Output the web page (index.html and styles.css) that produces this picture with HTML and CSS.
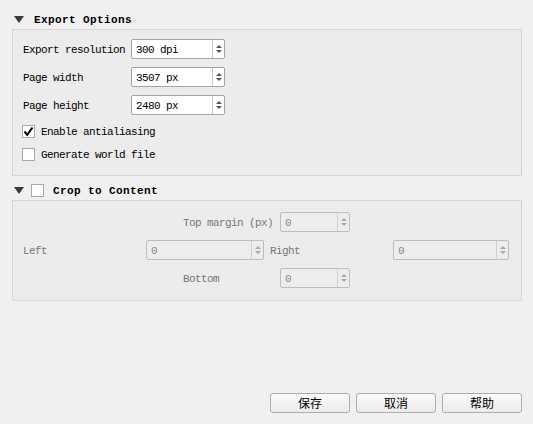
FILE: index.html
```html
<!DOCTYPE html>
<html>
<head>
<meta charset="utf-8">
<link rel="stylesheet" href="styles.css">
</head>
<body>
<div class="page">
  <div class="header first">
    <span class="tri"></span>
    <span class="htext">Export Options</span>
  </div>
  <div class="group g1">
    <div class="row">
      <span class="label lw1">Export resolution</span>
      <div class="spin w94"><span class="val">300 dpi</span><span class="btns"><i class="up"></i><i class="dn"></i></span></div>
    </div>
    <div class="row">
      <span class="label lw1">Page width</span>
      <div class="spin w94"><span class="val">3507 px</span><span class="btns"><i class="up"></i><i class="dn"></i></span></div>
    </div>
    <div class="row">
      <span class="label lw1">Page height</span>
      <div class="spin w94"><span class="val">2480 px</span><span class="btns"><i class="up"></i><i class="dn"></i></span></div>
    </div>
    <div class="check-row cr1">
      <span class="cb"><svg width="11" height="11" viewBox="0 0 11 11"><polyline points="1.5,5.5 4.2,8.8 9.5,1.5" fill="none" stroke="#000" stroke-width="2"/></svg></span>
      <span class="label">Enable antialiasing</span>
    </div>
    <div class="check-row cr2">
      <span class="cb"></span>
      <span class="label">Generate world file</span>
    </div>
  </div>
  <div class="header second">
    <span class="tri"></span>
    <span class="cb hcb"></span>
    <span class="htext">Crop to Content</span>
  </div>
  <div class="group g2">
    <div class="row indent">
      <span class="label lw2">Top margin (px)</span>
      <div class="spin dis w70"><span class="val">0</span><span class="btns"><i class="up"></i><i class="dn"></i></span></div>
    </div>
    <div class="row">
      <span class="label lw3">Left</span>
      <div class="spin dis w118"><span class="val">0</span><span class="btns"><i class="up"></i><i class="dn"></i></span></div>
      <span class="label lw3 right">Right</span>
      <div class="spin dis w116"><span class="val">0</span><span class="btns"><i class="up"></i><i class="dn"></i></span></div>
    </div>
    <div class="row indent">
      <span class="label lw2">Bottom</span>
      <div class="spin dis w70"><span class="val">0</span><span class="btns"><i class="up"></i><i class="dn"></i></span></div>
    </div>
  </div>
  <div class="footer">
    <button class="btn">保存</button>
    <button class="btn">取消</button>
    <button class="btn">帮助</button>
  </div>
</div>
</body>
</html>
```
FILE: styles.css
```css
html, body {
  margin: 0;
  padding: 0;
  background: #f0f0f0;
}
body {
  font-family: "Liberation Mono", "DejaVu Sans Mono", monospace;
  font-size: 11px;
  letter-spacing: -0.6px;
  color: #000;
}
.page {
  height: 424px;
  box-sizing: border-box;
  display: flex;
  flex-direction: column;
  padding: 0 11px 11px 12px;
}
.header {
  height: 20px;
  box-sizing: border-box;
  display: flex;
  align-items: center;
  padding-left: 2px;
}
.header.first { margin-top: 9px; }
.header.second { margin-top: 4px; }
.htext { padding-top: 2px; }
.tri {
  width: 0;
  height: 0;
  border-left: 5px solid transparent;
  border-right: 5px solid transparent;
  border-top: 7px solid #3a3a3a;
  margin-right: 10px;
  margin-top: 1px;
}
.second .tri { margin-right: 7px; }
.htext {
  font-weight: bold;
  letter-spacing: 0.4px;
  font-size: 11px;
}
.group {
  border: 1px solid #d6d6d6;
  background: #ececec;
  display: flex;
  flex-direction: column;
  gap: 8px;
}
.g1 {
  padding: 9px 10px 14px 10px;
  height: 147px;
  box-sizing: border-box;
}
.g2 {
  padding: 11px 10px 12px 10px;
  height: 101px;
  box-sizing: border-box;
}
.row {
  display: flex;
  align-items: center;
  height: 20px;
}
.label { white-space: nowrap; padding-top: 1px; }
.lw1 { width: 108px; }
.lw2 { width: 97px; color: #777; }
.lw3 { width: 123px; color: #777; }
.right { margin-left: 6px; }
.indent { padding-left: 160px; }
.spin {
  height: 20px;
  box-sizing: border-box;
  border: 1px solid #a3a3a3;
  border-radius: 2px;
  background: #fff;
  display: flex;
  align-items: stretch;
}
.w94 { width: 94px; }
.w70 { width: 70px; }
.w118 { width: 118px; }
.w116 { width: 116px; }
.val {
  flex: 1;
  padding-left: 4px;
  padding-top: 1px;
  display: flex;
  align-items: center;
}
.btns {
  width: 11px;
  border-left: 1px solid #c6c6c6;
  display: flex;
  flex-direction: column;
  align-items: center;
  justify-content: center;
  gap: 2px;
}
.btns i {
  width: 0;
  height: 0;
  border-left: 3px solid transparent;
  border-right: 3px solid transparent;
}
.btns .up { border-bottom: 3px solid #555; }
.btns .dn { border-top: 3px solid #555; }
.spin.dis {
  background: #ededed;
  border-color: #bdbdbd;
  color: #888;
}
.spin.dis .btns { border-left-color: #d0d0d0; }
.spin.dis .up { border-bottom-color: #a8a8a8; }
.spin.dis .dn { border-top-color: #a8a8a8; }
.check-row {
  display: flex;
  align-items: center;
  height: 13px;
}
.cr1 { margin-top: 2px; }
.cr2 { margin-top: 2px; }
.cb {
  width: 13px;
  height: 13px;
  box-sizing: border-box;
  border: 1px solid #a9a9a9;
  background: #fff;
  display: flex;
  align-items: center;
  justify-content: center;
  margin-left: -1px;
  margin-right: 6px;
}
.hcb {
  margin-left: 0;
  margin-right: 9px;
}
.footer {
  margin-top: auto;
  display: flex;
  justify-content: flex-end;
  gap: 6px;
}
.btn {
  width: 80px;
  height: 20px;
  box-sizing: border-box;
  border: 1px solid #adadad;
  border-radius: 3px;
  background: linear-gradient(#fafafa, #ebebeb);
  font-family: "Noto Sans CJK SC", sans-serif;
  font-size: 12px;
  letter-spacing: 0;
  color: #000;
  padding: 0;
  line-height: 18px;
}
```
